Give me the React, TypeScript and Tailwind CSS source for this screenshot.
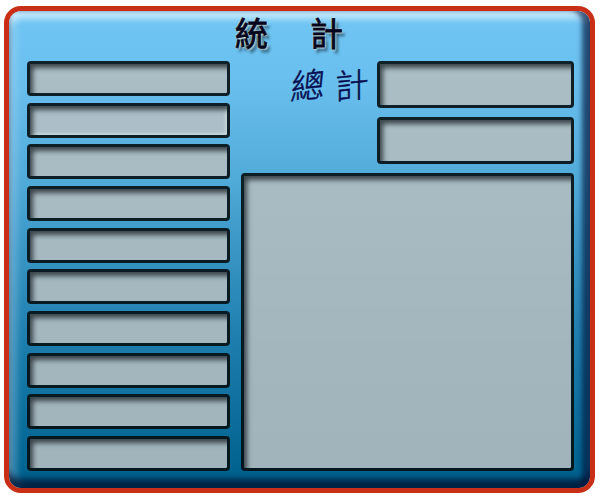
const rowGaps = [
  "mb-[7px]",
  "mb-[6px]",
  "mb-[7px]",
  "mb-[7px]",
  "mb-[6px]",
  "mb-[7px]",
  "mb-[7px]",
  "mb-[6px]",
  "mb-[7px]",
  "",
];

const well =
  "rounded-[4px] border-[3px] border-[#060e12]/90 bg-[#b2bcc0]/90 bg-clip-padding shadow-[inset_4px_5px_5px_-1px_rgba(20,26,30,0.72)]";

const hoverWell =
  "rounded-[4px] border-[3px] border-[#060e12]/90 bg-[#b5bfc3]/90 bg-clip-padding shadow-[inset_4px_5px_5px_-1px_rgba(20,26,30,0.72),inset_-2px_-2px_3px_rgba(215,232,232,0.6)]";

export default function App() {
  return (
    <div className="h-[500px] w-[600px] overflow-hidden bg-white pt-[6px] pl-[4px]">
      <main className="flex h-[487px] w-[591px] flex-col overflow-hidden rounded-[17px] border-[5px] border-[#c92e16] bg-[linear-gradient(180deg,#70c6f5_0%,#68beec_16%,#50aad8_36%,#3c98c7_48%,#1c7dac_70%,#00628f_97%)] bg-clip-padding font-['Noto_Sans_CJK_TC','Noto_Sans_CJK_SC',sans-serif]">
        <div className="flex h-full flex-col rounded-[12px] pr-[16px] pl-[18px] shadow-[inset_-9px_0_5px_-1px_rgba(0,25,65,0.68),inset_0_-10px_6px_-1px_rgba(0,15,45,0.75),inset_0_9px_6px_-1px_rgba(225,245,255,0.72),inset_10px_0_7px_-2px_rgba(190,225,250,0.33)]">
          <h1 className="flex h-[50px] gap-[42px] pl-[208px] text-[33px] leading-[43px] font-normal text-[#05051f] [-webkit-text-stroke:0.8px_#05051f] [text-shadow:0_0_2px_#e9e5ca,1px_1px_2px_#e9e5ca,3px_4px_3px_rgba(20,45,65,0.75)]">
            <span>統</span>
            <span>計</span>
          </h1>
          <div className="flex gap-[11px]">
            <section className="flex w-[203px] flex-col">
              {rowGaps.map((gap, i) => (
                <div key={i} className={gap}>
                  <div className={`h-[35px] ${i === 1 ? hoverWell : well}`} />
                </div>
              ))}
            </section>
            <section className="flex w-[333px] flex-col">
              <div className="flex h-[112px] justify-between">
                <h2 className="flex h-[47px] gap-[10px] pl-[50px] text-[34px] leading-[46px] font-light text-[#050c50] [-webkit-text-stroke:0.5px_#050c50]">
                  <span className="-skew-x-12 -rotate-6">總</span>
                  <span className="-skew-x-6 -rotate-6">計</span>
                </h2>
                <div className="flex w-[197px] flex-col gap-[9px]">
                  <div className={`h-[47px] ${well}`} />
                  <div className={`h-[47px] ${well}`} />
                </div>
              </div>
              <div className={`h-[298px] ${well}`} />
            </section>
          </div>
        </div>
      </main>
    </div>
  );
}
